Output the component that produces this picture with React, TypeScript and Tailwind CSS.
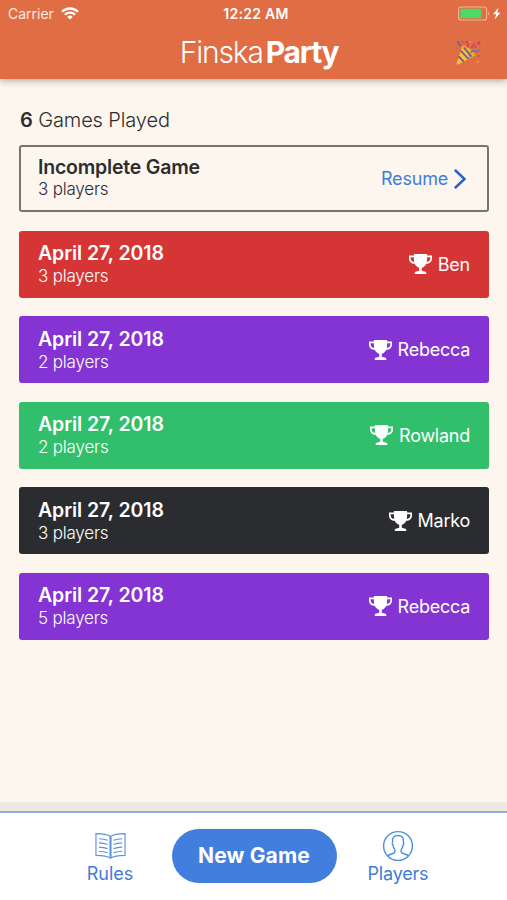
import clsx from "clsx";

interface Game {
  id: number;
  date: string;
  players: number;
  winner: string;
  color: string;
}

const GAMES: Game[] = [
  { id: 1, date: "April 27, 2018", players: 3, winner: "Ben", color: "bg-[#d63535]" },
  { id: 2, date: "April 27, 2018", players: 2, winner: "Rebecca", color: "bg-[#8334d3]" },
  { id: 3, date: "April 27, 2018", players: 2, winner: "Rowland", color: "bg-[#31bf6b]" },
  { id: 4, date: "April 27, 2018", players: 3, winner: "Marko", color: "bg-[#2a2c30]" },
  { id: 5, date: "April 27, 2018", players: 5, winner: "Rebecca", color: "bg-[#8334d3]" },
];

function WifiIcon() {
  return (
    <svg className="w-[18px] h-[13px]" viewBox="0 0 18 13" fill="none" stroke="currentColor" strokeWidth="2.3">
      <path d="M1 4.8a11.4 11.4 0 0 1 16 0" />
      <path d="M3.9 7.8a7.3 7.3 0 0 1 10.2 0" />
      <path d="M9 12.6 6.3 9.9a3.9 3.9 0 0 1 5.4 0z" fill="currentColor" stroke="none" />
    </svg>
  );
}

function BatteryIcon() {
  return (
    <svg className="w-[44px] h-[15px]" viewBox="0 0 44 15" fill="none">
      <rect x="0.6" y="1" width="28" height="13" rx="2.6" stroke="#f3b497" strokeWidth="1.1" />
      <rect x="2.4" y="2.8" width="21" height="9.4" rx="1" fill="#4cd964" />
      <path d="M30.2 5.4c1.3.5 1.3 3.7 0 4.2z" fill="#f3b497" />
      <path d="M40.6 1.6 35 8.3h3.2l-1.5 5.2 5.7-6.8h-3.2z" fill="#fff" />
    </svg>
  );
}

function PartyIcon() {
  return (
    <svg className="w-[26px] h-[26px]" viewBox="0 0 26 26" fill="none">
      <path d="M7.2 6.2 20 15.8 3 24.6c-1 .4-1.6-.2-1.3-1.2z" fill="#f2c43d" />
      <path d="M12 9.8 20 15.8l-6.2 3.2z" fill="#d89b2b" />
      <ellipse cx="13.8" cy="11" rx="2.4" ry="7.6" transform="rotate(-52 13.8 11)" fill="#e8b42c" />
      <path d="m5.6 10.5 7.8 8.5M3.7 16.5l5 5.1M8.8 7.5l7.5 9" stroke="#7652a0" strokeWidth="1.8" />
      <path d="M2.2 1.5c2.8 1.3 1.2 2.9 3.4 4.4" stroke="#5668ae" strokeWidth="1.8" />
      <path d="M10 2.2c3-1 4.1 2.6 2.2 5.2" stroke="#d93f5c" strokeWidth="1.8" />
      <path d="M15.6 12.6c3.2-3.8 4.5.6 9-2.6" stroke="#667cad" strokeWidth="1.8" />
      <path d="m16.2 8.2 3.7-4.6" stroke="#d94755" strokeWidth="1.8" />
      <circle cx="23.8" cy="3.2" r="1.7" fill="#d94068" />
      <circle cx="20.5" cy="7.1" r="1.1" fill="#d94068" />
      <circle cx="7.4" cy="1.8" r="1" fill="#d94068" />
      <circle cx="23.6" cy="16" r="1" fill="#d94755" />
      <circle cx="22.8" cy="21.7" r="1" fill="#e5a03a" />
      <circle cx="15.2" cy="2" r=".8" fill="#e5b54a" />
    </svg>
  );
}

function TrophyIcon() {
  return (
    <svg className="w-[23px] h-[20px]" viewBox="0 0 23 20" fill="currentColor">
      <path
        fillRule="evenodd"
        d="M4.900 0h13.200v1.500H23v2.900c0 3.300-2.300 5.200-5.700 5.300-1 2.100-2.500 3.500-4.500 4v3.100l3.600 1c.6.200.9.6.9 1.300v.9H5.700v-.9c0-.7.3-1.100.9-1.300l3.600-1v-3.100c-2-.5-3.500-1.900-4.500-4C2.300 9.600 0 7.700 0 4.400V1.500h4.900zM1.700 3.200v1.200c0 1.900 1.100 3.100 3.500 3.500-.2-1.400-.3-2.900-.3-4.700zM18.100 3.200c0 1.800-.1 3.300-.3 4.700 2.400-.4 3.500-1.600 3.500-3.500V3.200z"
      />
    </svg>
  );
}

function BookIcon() {
  return (
    <svg className="w-[31px] h-[28px]" viewBox="0 0 32 28" fill="none" stroke="#5f93e0" strokeWidth="1.2">
      <path d="M16 4.2C12.5 1.500 6.500 1.200 1 1.200v22.400c6 0 11.500.4 15 3 3.500-2.600 9-3 15-3V1.200c-5.500 0-11.500.3-15 3z" />
      <path d="M15.500 4.200v22M16.500 4.200v22" />
      <path d="M4 6.500c3.400.1 6.200.6 9 1.600M4 10.800c3.400.1 6.200.6 9 1.600M4 15.100c3.400.1 6.200.6 9 1.600M4 19.400c3.400.1 6.200.6 9 1.600" />
      <path d="M28 6.500c-3.400.1-6.200.6-9 1.600M28 10.800c-3.400.1-6.200.6-9 1.600M28 15.100c-3.400.1-6.200.6-9 1.600M28 19.400c-3.400.1-6.200.6-9 1.600" />
    </svg>
  );
}

function PersonIcon() {
  return (
    <svg className="w-[32px] h-[32px]" viewBox="0 0 32 32" fill="none" stroke="#4c90e2" strokeWidth="1.4">
      <circle cx="16" cy="16" r="14.4" />
      <path d="M5.500 26c1-1.600 4.200-1.900 6.300-2.900 1.200-.6 1.300-2.200.9-3.700-1.100-1.200-1.600-2.800-1.700-4.300-.8-.8-1-2.700-.3-3.400-.7-3.700 1.200-6.200 5.300-6.200s6 2.500 5.300 6.200c.7.7.5 2.600-.3 3.400-.1 1.500-.6 3.100-1.700 4.300-.4 1.500-.3 3.100.9 3.700 2.100 1 5.300 1.300 6.300 2.900" />
    </svg>
  );
}

function GameCard({ game }: { game: Game }) {
  return (
    <div
      className={clsx(
        "flex items-center justify-between h-[67px] px-[19px] rounded-[3px] text-white",
        game.color
      )}
    >
      <div className="pt-px">
        <p className="text-[19.5px] leading-[24px] tracking-[-0.07px] font-semibold">{game.date}</p>
        <p className="text-[17px] leading-[23px] tracking-[-0.2px] font-light">{game.players} players</p>
      </div>
      <div className="flex items-center gap-[6px]">
        <TrophyIcon />
        <span className="text-[18px] tracking-[-0.25px]">{game.winner}</span>
      </div>
    </div>
  );
}

export default function App() {
  return (
    <div className="flex flex-col w-full h-screen overflow-hidden bg-[#fcf6ef] font-['Inter',sans-serif] text-[#2d2d2f]">
      {/* Header */}
      <header className="h-[79px] shrink-0 bg-[#e06d43] text-white shadow-[0_2px_7px_rgba(0,0,0,0.3)]">
        <div className="grid grid-cols-3 items-center h-[27px] pl-[8px] pr-[5px] text-[14px]">
          <div className="flex items-center gap-[7px]">
            <span className="text-[#fdebe2]">Carrier</span>
            <WifiIcon />
          </div>
          <span className="pl-[2px] text-center font-semibold tracking-[0.3px]">12:22 AM</span>
          <div className="flex justify-end">
            <BatteryIcon />
          </div>
        </div>
        <div className="grid grid-cols-[1fr_auto_1fr] items-center h-[51px] pl-[37px] pr-[26px]">
          <span />
          <h1 className="flex gap-[3px] text-[30px]">
            <span className="font-light tracking-[-1.15px]">Finska</span>
            <span className="font-bold tracking-[-1.3px]">Party</span>
          </h1>
          <div className="flex justify-end">
            <PartyIcon />
          </div>
        </div>
      </header>

      {/* Game list */}
      <main className="flex-1 min-h-0 pl-[19px] pt-[26px] pr-[18px]">
        <h2 className="pl-px text-[20px] leading-[30px] tracking-[-0.12px] font-light">
          <span className="font-semibold">6</span> Games Played
        </h2>
        <div className="flex flex-col gap-[18.5px] mt-[10px]">
          <div className="flex items-center justify-between h-[67px] pl-[17px] pr-[20px] rounded-[3px] border-2 border-[#777472]">
            <div className="pb-px">
              <p className="text-[19.5px] leading-[22px] tracking-[-0.2px] font-semibold">Incomplete Game</p>
              <p className="text-[17px] leading-[22px] tracking-[-0.2px] font-light">3 players</p>
            </div>
            <button className="flex items-center gap-[6px] text-[18px] tracking-[-0.2px] text-[#427cda]">
              Resume
              <svg className="w-[13px] h-[20px]" viewBox="0 0 13 20" fill="none" stroke="#315fce" strokeWidth="2.5" strokeLinecap="round">
                <path d="m1.500 1.500 9 8.500-9 8.500" />
              </svg>
            </button>
          </div>
          {GAMES.map((game) => (
            <GameCard key={game.id} game={game} />
          ))}
        </div>
      </main>

      {/* Bottom bar */}
      <div className="h-[9px] shrink-0 bg-[#eee8e2]" />
      <footer className="flex items-start justify-center h-[89px] pl-px shrink-0 border-t-2 border-[#8faee0] bg-white text-[#427cda]">
        <button className="flex flex-col items-center w-[123px] pt-[19px]">
          <BookIcon />
          <span className="pt-px text-[18px] leading-[26px]">Rules</span>
        </button>
        <button className="w-[165px] h-[54px] mt-[16px] rounded-full bg-[#427edd] text-[21px] tracking-[0.15px] font-bold text-white">
          New Game
        </button>
        <button className="flex flex-col items-center w-[123px] pt-[17px]">
          <PersonIcon />
          <span className="text-[18px] leading-[24px] tracking-[-0.2px]">Players</span>
        </button>
      </footer>
    </div>
  );
}
